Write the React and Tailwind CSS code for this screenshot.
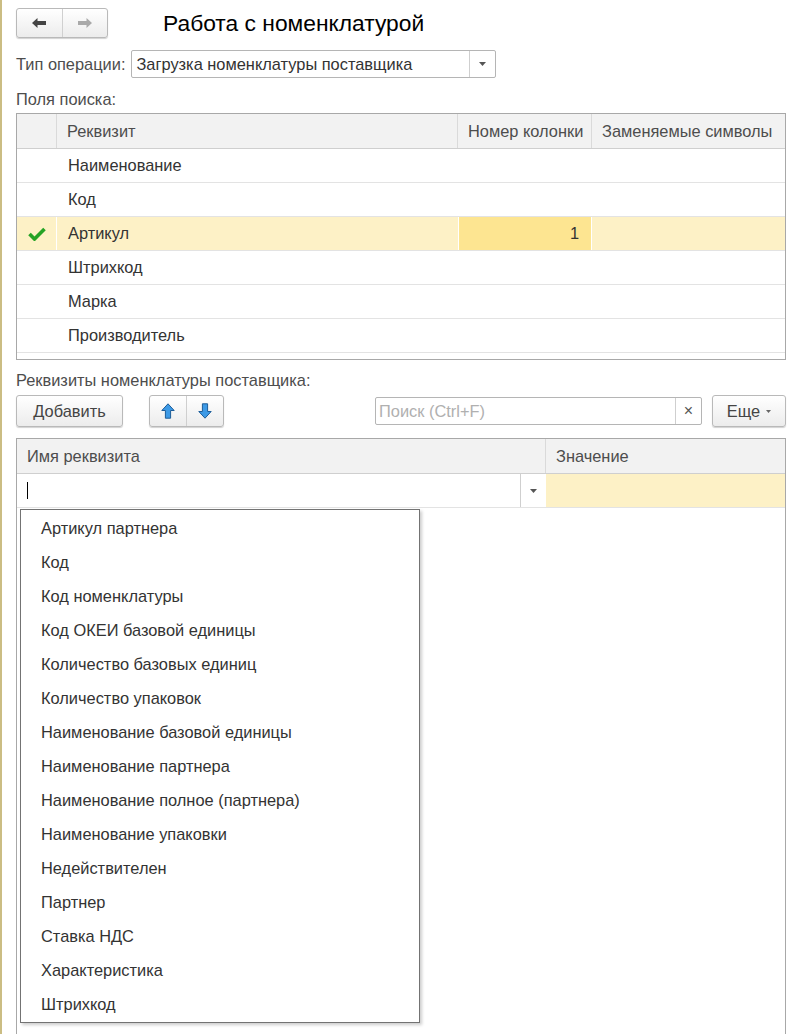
import React from 'react';

const searchFields = [
  { name: 'Наименование' },
  { name: 'Код' },
  { name: 'Артикул', checked: true, column: '1' },
  { name: 'Штрихкод' },
  { name: 'Марка' },
  { name: 'Производитель' },
];

const dropdownItems = [
  'Артикул партнера',
  'Код',
  'Код номенклатуры',
  'Код ОКЕИ базовой единицы',
  'Количество базовых единиц',
  'Количество упаковок',
  'Наименование базовой единицы',
  'Наименование партнера',
  'Наименование полное (партнера)',
  'Наименование упаковки',
  'Недействителен',
  'Партнер',
  'Ставка НДС',
  'Характеристика',
  'Штрихкод',
];

const Caret = () => (
  <svg width="7" height="4" viewBox="0 0 7 4">
    <path d="M0 0 L7 0 L3.5 4 Z" fill="#555" />
  </svg>
);

const ArrowH = ({ dir, color }) => (
  <svg width="14" height="10" viewBox="0 0 14 10">
    {dir === 'left' ? (
      <path d="M0 5 L5.5 0 L5.5 3 L14 3 L14 7 L5.5 7 L5.5 10 Z" fill={color} />
    ) : (
      <path d="M14 5 L8.5 0 L8.5 3 L0 3 L0 7 L8.5 7 L8.5 10 Z" fill={color} />
    )}
  </svg>
);

const ArrowV = ({ dir }) => (
  <svg width="14" height="16" viewBox="0 0 14 16">
    {dir === 'up' ? (
      <path d="M7 0.8 L13.2 7.5 L9.6 7.5 L9.6 15.2 L4.4 15.2 L4.4 7.5 L0.8 7.5 Z" fill="#3d9ae6" stroke="#1d5d99" strokeWidth="1" strokeLinejoin="round" />
    ) : (
      <path d="M7 15.2 L13.2 8.5 L9.6 8.5 L9.6 0.8 L4.4 0.8 L4.4 8.5 L0.8 8.5 Z" fill="#3d9ae6" stroke="#1d5d99" strokeWidth="1" strokeLinejoin="round" />
    )}
  </svg>
);

const Check = () => (
  <svg width="18" height="14" viewBox="0 0 18 14">
    <path d="M1.5 7 L6.5 12 L16.5 2" fill="none" stroke="#25a325" strokeWidth="3.6" strokeLinejoin="miter" />
  </svg>
);

const btn = 'border border-[#b9b9b9] rounded-[3px] bg-gradient-to-b from-white to-[#ececec] shadow-[0_1px_1px_rgba(0,0,0,0.18)]';

const App = () => {
  return (
    <div
      className="w-[789px] h-[1034px] overflow-hidden bg-white border-l-2 border-[#cbbd83] pl-[14px] pr-[3px] pt-[8px] text-[16.4px] text-[#333]"
      style={{ fontFamily: '"Liberation Sans", Arial, sans-serif' }}
    >
      {/* Header */}
      <div className="flex items-center h-[30px]">
        <div className={`flex h-[30px] w-[92px] ${btn}`}>
          <div className="flex-1 flex items-center justify-center border-r border-[#d0d0d0]">
            <ArrowH dir="left" color="#444" />
          </div>
          <div className="flex-1 flex items-center justify-center">
            <ArrowH dir="right" color="#a9a9a9" />
          </div>
        </div>
        <div className="ml-[55px] text-[22.8px] text-black leading-none">Работа с номенклатурой</div>
      </div>

      {/* Operation type */}
      <div className="flex items-center mt-[12px] h-[28px]">
        <span className="text-[#4d4d4d]">Тип операции:</span>
        <div className="ml-[6px] flex h-[28px] w-[365px] border border-[#b5b5b5] rounded-[2px] bg-white">
          <div className="flex-1 flex items-center pl-[4px] text-[#333]">Загрузка номенклатуры поставщика</div>
          <div className="w-[26px] flex items-center justify-center border-l border-[#cfcfcf]">
            <Caret />
          </div>
        </div>
      </div>

      <div className="mt-[11px] h-[20px] flex items-center text-[#4d4d4d]">Поля поиска:</div>

      {/* Search fields table */}
      <div className="mt-[4px] h-[247px] border border-[#a8a8a8] flex flex-col">
        <div className="flex h-[35px] bg-[#f2f2f2] border-b border-[#cfcfcf] text-[#4d4d4d] shrink-0">
          <div className="w-[40px] border-r border-[#dadada]" />
          <div className="w-[401px] border-r border-[#dadada] flex items-center pl-[10px]">Реквизит</div>
          <div className="w-[134px] border-r border-[#dadada] flex items-center pl-[10px]">Номер колонки</div>
          <div className="flex-1 flex items-center pl-[10px]">Заменяемые символы</div>
        </div>
        {searchFields.map((f) => (
          <div
            key={f.name}
            className={`flex h-[34px] border-b border-[#e3e3e3] shrink-0 ${f.checked ? 'bg-[#fdf1c6]' : 'bg-white'}`}
          >
            <div className={`w-[40px] flex items-center justify-center ${f.checked ? 'border-r border-white' : ''}`}>
              {f.checked && <Check />}
            </div>
            <div className="w-[401px] flex items-center pl-[11px]">{f.name}</div>
            <div
              className={`w-[134px] flex items-center justify-end pr-[12px] ${f.checked ? 'bg-[#fde591] border-x border-white' : ''}`}
            >
              {f.column}
            </div>
            <div className="flex-1" />
          </div>
        ))}
      </div>

      <div className="mt-[10px] h-[20px] flex items-center text-[#4d4d4d]">Реквизиты номенклатуры поставщика:</div>

      {/* Toolbar */}
      <div className="mt-[5px] flex items-center h-[32px]">
        <div className={`w-[107px] h-[32px] flex items-center justify-center text-[#444] ${btn}`}>Добавить</div>
        <div className={`ml-[26px] w-[75px] h-[32px] flex ${btn}`}>
          <div className="flex-1 flex items-center justify-center border-r border-[#cfcfcf]">
            <ArrowV dir="up" />
          </div>
          <div className="flex-1 flex items-center justify-center">
            <ArrowV dir="down" />
          </div>
        </div>
        <div className="ml-[151px] w-[327px] h-[28px] flex border border-[#b5b5b5] rounded-[2px] bg-white">
          <div className="flex-1 flex items-center pl-[3px] text-[#b0b0b0]">Поиск (Ctrl+F)</div>
          <div className="w-[26px] flex items-center justify-center border-l border-[#cfcfcf] text-[#555] text-[16px]">×</div>
        </div>
        <div className={`ml-[10px] w-[74px] h-[32px] flex items-center justify-center gap-[6px] text-[#444] ${btn}`}>
          <span>Еще</span>
          <svg width="5" height="3" viewBox="0 0 5 3">
            <path d="M0 0 L5 0 L2.5 3 Z" fill="#666" />
          </svg>
        </div>
      </div>

      {/* Supplier attributes table */}
      <div className="relative mt-[11px] h-[700px] border border-[#a8a8a8]">
        <div className="flex h-[35px] bg-[#f2f2f2] border-b border-[#cfcfcf] text-[#4d4d4d]">
          <div className="w-[529px] border-r border-[#dadada] flex items-center pl-[10px]">Имя реквизита</div>
          <div className="flex-1 flex items-center pl-[10px]">Значение</div>
        </div>
        <div className="flex h-[34px] border-b border-[#e3e3e3]">
          <div className="w-[529px] flex bg-white">
            <div className="flex-1 flex items-center pl-[10px]">
              <div className="w-px h-[17px] bg-black" />
            </div>
            <div className="w-[26px] flex items-center justify-center border-l border-[#cfcfcf]">
              <Caret />
            </div>
          </div>
          <div className="flex-1 bg-[#fdf1c6]" />
        </div>

        {/* Dropdown list */}
        <div className="absolute left-[3px] top-[70px] w-[400px] bg-white border border-[#737373] shadow-[2px_2px_3px_rgba(0,0,0,0.2)] py-[1px]">
          {dropdownItems.map((item) => (
            <div key={item} className="h-[34px] flex items-center pl-[20px] text-[#333]">
              {item}
            </div>
          ))}
        </div>
      </div>
    </div>
  );
};

export default App;
